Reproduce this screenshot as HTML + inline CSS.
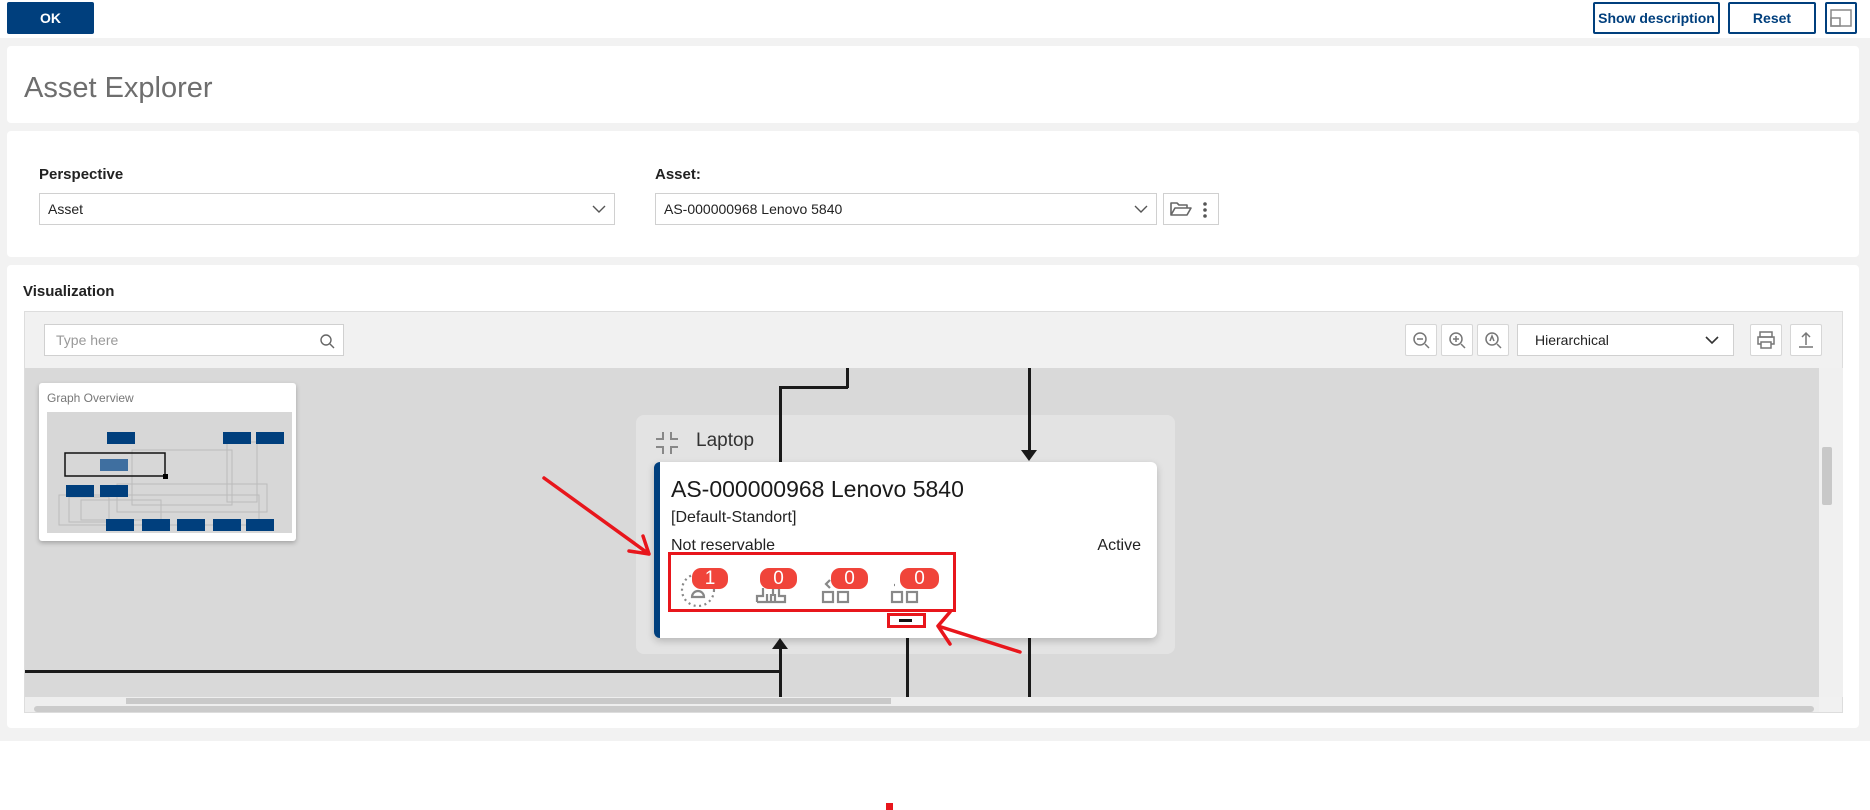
<!DOCTYPE html>
<html><head><meta charset="utf-8">
<style>
*{box-sizing:border-box;margin:0;padding:0}
body{width:1870px;height:810px;background:#fff;font-family:"Liberation Sans",Arial,sans-serif;position:relative;overflow:hidden;color:#222}
.a{position:absolute}
.btn{position:absolute;border:2px solid #003f7d;background:#fff;color:#003f7d;font-weight:bold;font-size:14px;display:flex;align-items:center;justify-content:center;border-radius:2px}
.panel{position:absolute;left:7px;width:1852px;background:#fff;border-radius:4px}
.sel{position:absolute;border:1px solid #d0d0d0;background:#fff;font-size:14px;display:flex;align-items:center;padding-left:8px}
.tb{position:absolute;top:324px;width:32px;height:32px;border:1px solid #d6d6d6;background:#fff;border-radius:2px}
.badge{position:absolute;top:568px;height:21px;background:#f0443a;color:#fff;border-radius:9px;font-size:19px;line-height:21px;text-align:center}
.ln{position:absolute;background:#1a1a1a}
</style></head><body>
<div class="a" style="left:0;top:38px;width:1870px;height:703px;background:#f2f2f2"></div>
<div class="a" style="left:7px;top:2px;width:87px;height:32px;background:#003f7d;border-radius:2px;color:#fff;font-weight:bold;font-size:14px;display:flex;align-items:center;justify-content:center">OK</div>
<div class="btn" style="left:1593px;top:2px;width:127px;height:32px">Show description</div>
<div class="btn" style="left:1728px;top:2px;width:88px;height:32px">Reset</div>
<div class="btn" style="left:1825px;top:2px;width:32px;height:32px"><svg width="22" height="18"><rect x="1" y="1" width="20" height="16" fill="none" stroke="#888" stroke-width="1.5"/><rect x="1" y="9" width="9" height="8" fill="none" stroke="#888" stroke-width="1.5"/></svg></div>

<div class="panel" style="top:46px;height:77px"><div class="a" style="left:17px;top:26px;font-size:29px;color:#6e6e6e">Asset Explorer</div></div>

<div class="panel" style="top:131px;height:126px">
<div class="a" style="left:32px;top:35px;font-size:15px;font-weight:bold">Perspective</div>
<div class="a" style="left:648px;top:35px;font-size:15px;font-weight:bold">Asset:</div>
</div>
<div class="sel" style="left:39px;top:193px;width:576px;height:32px">Asset<svg class="a" style="right:8px;top:11px" width="14" height="9"><path d="M1 1l6 6 6-6" fill="none" stroke="#555" stroke-width="1.4"/></svg></div>
<div class="sel" style="left:655px;top:193px;width:502px;height:32px">AS-000000968 Lenovo 5840<svg class="a" style="right:8px;top:11px" width="14" height="9"><path d="M1 1l6 6 6-6" fill="none" stroke="#555" stroke-width="1.4"/></svg></div>
<div class="sel" style="left:1163px;top:193px;width:56px;height:32px;padding-left:6px"><svg width="22" height="16"><path d="M1 14V2h6l2 2h8v3M1 14l4-7h16l-4 7z" fill="none" stroke="#666" stroke-width="1.6" stroke-linejoin="round"/></svg><svg class="a" style="left:38px;top:8px" width="6" height="16"><circle cx="3" cy="2" r="1.8" fill="#555"/><circle cx="3" cy="8" r="1.8" fill="#555"/><circle cx="3" cy="14" r="1.8" fill="#555"/></svg></div>

<div class="panel" style="top:265px;height:463px"><div class="a" style="left:16px;top:18px;font-size:15px;font-weight:bold">Visualization</div></div>

<div class="a" style="left:24px;top:311px;width:1819px;height:402px;background:#f1f1f1;border:1px solid #ddd"></div>
<div class="sel" style="left:44px;top:324px;width:300px;height:32px;color:#999;padding-left:11px">Type here<svg class="a" style="right:8px;top:8px" width="16" height="16"><circle cx="7" cy="7" r="5" fill="none" stroke="#666" stroke-width="1.4"/><path d="M11 11l4 4" stroke="#666" stroke-width="1.4"/></svg></div>
<div class="tb" style="left:1405px"><svg width="30" height="30"><circle cx="14" cy="14" r="6" fill="none" stroke="#777" stroke-width="1.5"/><path d="M19 19l4 4M11 14h6" stroke="#777" stroke-width="1.5"/></svg></div>
<div class="tb" style="left:1441px"><svg width="30" height="30"><circle cx="14" cy="14" r="6" fill="none" stroke="#777" stroke-width="1.5"/><path d="M19 19l4 4M11 14h6M14 11v6" stroke="#777" stroke-width="1.5"/></svg></div>
<div class="tb" style="left:1477px"><svg width="30" height="30"><circle cx="14" cy="14" r="6" fill="none" stroke="#777" stroke-width="1.5"/><path d="M19 19l4 4M12 16l2-5 2 5" fill="none" stroke="#777" stroke-width="1.5"/></svg></div>
<div class="sel" style="left:1517px;top:324px;width:217px;height:32px;padding-left:17px;font-size:14px">Hierarchical<svg class="a" style="right:14px;top:11px" width="14" height="9"><path d="M1 1l6 6 6-6" fill="none" stroke="#333" stroke-width="1.6"/></svg></div>
<div class="tb" style="left:1750px"><svg width="30" height="30"><rect x="9" y="7" width="12" height="5" fill="none" stroke="#777" stroke-width="1.5"/><rect x="7" y="12" width="16" height="7" fill="none" stroke="#777" stroke-width="1.5"/><rect x="10" y="17" width="10" height="6" fill="#fff" stroke="#777" stroke-width="1.5"/></svg></div>
<div class="tb" style="left:1790px"><svg width="30" height="30"><path d="M15 8v12M11 12l4-4 4 4M8 22h14" fill="none" stroke="#777" stroke-width="1.5"/></svg></div>

<div class="a" style="left:25px;top:368px;width:1794px;height:329px;background:#d9d9d9"></div>
<div class="a" style="left:1819px;top:368px;width:24px;height:329px;background:#f0f0f0"></div>
<div class="a" style="left:1822px;top:447px;width:10px;height:58px;background:#c8c8c8;border-radius:2px"></div>
<div class="a" style="left:25px;top:697px;width:1794px;height:15px;background:#eee"></div>
<div class="a" style="left:126px;top:698px;width:765px;height:6px;background:#c9c9c9"></div>
<div class="a" style="left:34px;top:706px;width:1780px;height:6px;background:#cbcbcb;border-radius:3px"></div>

<div class="a" style="left:39px;top:383px;width:257px;height:158px;background:#fff;border-radius:3px;box-shadow:0 2px 5px rgba(0,0,0,.25)">
 <div class="a" style="left:8px;top:8px;font-size:12px;color:#777">Graph Overview</div>
 <svg class="a" style="left:8px;top:29px" width="245" height="121"><rect width="245" height="121" fill="#d7d7d7"/>
  <g fill="none" stroke="#bbb"><rect x="12" y="83" width="200" height="30"/><rect x="22" y="85" width="40" height="25"/><rect x="34" y="88" width="80" height="20"/><rect x="70" y="72" width="150" height="28"/><rect x="85" y="38" width="100" height="55"/><rect x="180" y="30" width="30" height="60"/></g>
  <g fill="#003f7d"><rect x="60" y="20" width="28" height="12"/><rect x="176" y="20" width="28" height="12"/><rect x="209" y="20" width="28" height="12"/><rect x="19" y="73" width="28" height="12"/><rect x="53" y="73" width="28" height="12"/><rect x="59" y="107" width="28" height="12"/><rect x="95" y="107" width="28" height="12"/><rect x="130" y="107" width="28" height="12"/><rect x="166" y="107" width="28" height="12"/><rect x="199" y="107" width="28" height="12"/></g>
  <rect x="53" y="47" width="28" height="12" fill="#3f6fa0"/>
  <rect x="18" y="41" width="100" height="23" fill="none" stroke="#111" stroke-width="1.5"/><rect x="116" y="62" width="5" height="5" fill="#000"/>
 </svg>
</div>

<div class="a" style="left:636px;top:415px;width:539px;height:239px;background:#e3e3e3;border-radius:8px">
 <svg class="a" style="left:19px;top:16px" width="24" height="24"><path d="M8 1v7H1M16 1v7h7M8 23v-7H1M16 23v-7h7" fill="none" stroke="#888" stroke-width="2"/></svg>
 <div class="a" style="left:60px;top:15px;font-size:19px;color:#333">Laptop</div>
</div>

<div class="a" style="left:25px;top:368px;width:1794px;height:329px;overflow:hidden">
 <div class="ln" style="left:754px;top:20px;width:3px;height:80px"></div>
 <div class="ln" style="left:754px;top:18px;width:69px;height:3px"></div>
 <div class="ln" style="left:821px;top:0;width:3px;height:20px"></div>
 <div class="ln" style="left:1003px;top:0;width:3px;height:85px"></div>
 <div class="a" style="left:996px;top:82px;width:0;height:0;border-left:8px solid transparent;border-right:8px solid transparent;border-top:11px solid #1a1a1a"></div>
 <div class="ln" style="left:0;top:302px;width:757px;height:3px"></div>
 <div class="ln" style="left:754px;top:275px;width:3px;height:54px"></div>
 <div class="a" style="left:747px;top:270px;width:0;height:0;border-left:8px solid transparent;border-right:8px solid transparent;border-bottom:11px solid #1a1a1a"></div>
 <div class="ln" style="left:881px;top:260px;width:3px;height:69px"></div>
 <div class="ln" style="left:1003px;top:260px;width:3px;height:69px"></div>
</div>

<div class="a" style="left:654px;top:462px;width:503px;height:176px;background:#fff;border-radius:6px;border-left:6px solid #003f7d;box-shadow:0 3px 8px rgba(0,0,0,.2)">
 <div class="a" style="left:11px;top:14px;font-size:23px;color:#1a1a1a">AS-000000968 Lenovo 5840</div>
 <div class="a" style="left:11px;top:47px;font-size:16px">[Default-Standort]</div>
 <div class="a" style="left:11px;top:75px;font-size:16px">Not reservable</div>
 <div class="a" style="right:16px;top:75px;font-size:16px">Active</div>
</div>
<svg class="a" style="left:680px;top:570px" width="270" height="40">
 <g fill="none" stroke="#888" stroke-width="2.2">
  <circle cx="18" cy="20" r="16" stroke-dasharray="2 3.5"/><path d="M12 27a6 6 0 0 1 12 0z"/>
  <path d="M77 32h28v-6h-6v-8h-6v8"/><path d="M77 32v-6h6v-8"/><path d="M87 24v7M91 24v7M95 24v7"/>
  <rect x="143" y="22" width="10" height="10"/><rect x="158" y="22" width="10" height="10"/><path d="M150 10l-4 4 4 4"/>
  <rect x="212" y="22" width="10" height="10"/><rect x="227" y="22" width="10" height="10"/><path d="M214 15h1"/>
 </g>
</svg>
<div class="badge" style="left:692px;width:36px">1</div>
<div class="badge" style="left:760px;width:37px">0</div>
<div class="badge" style="left:831px;width:37px">0</div>
<div class="badge" style="left:900px;width:39px">0</div>
<div class="a" style="left:668px;top:552px;width:288px;height:60px;border:3px solid #e8161c"></div>
<div class="a" style="left:887px;top:613px;width:39px;height:15px;border:3px solid #e8161c"></div>
<div class="a" style="left:899px;top:619px;width:13px;height:3px;background:#111"></div>
<svg class="a" style="left:0;top:0" width="1870" height="810">
 <g stroke="#e8161c" stroke-width="3.5" fill="none" stroke-linecap="round">
  <path d="M544 478L649 554M649 554l-20-3M649 554l-6-18"/>
  <path d="M1020 652L938 626M938 626l12-14M938 626l12 18"/>
 </g>
 <rect x="886" y="803" width="7" height="7" fill="#e8161c"/>
</svg>
</body></html>
